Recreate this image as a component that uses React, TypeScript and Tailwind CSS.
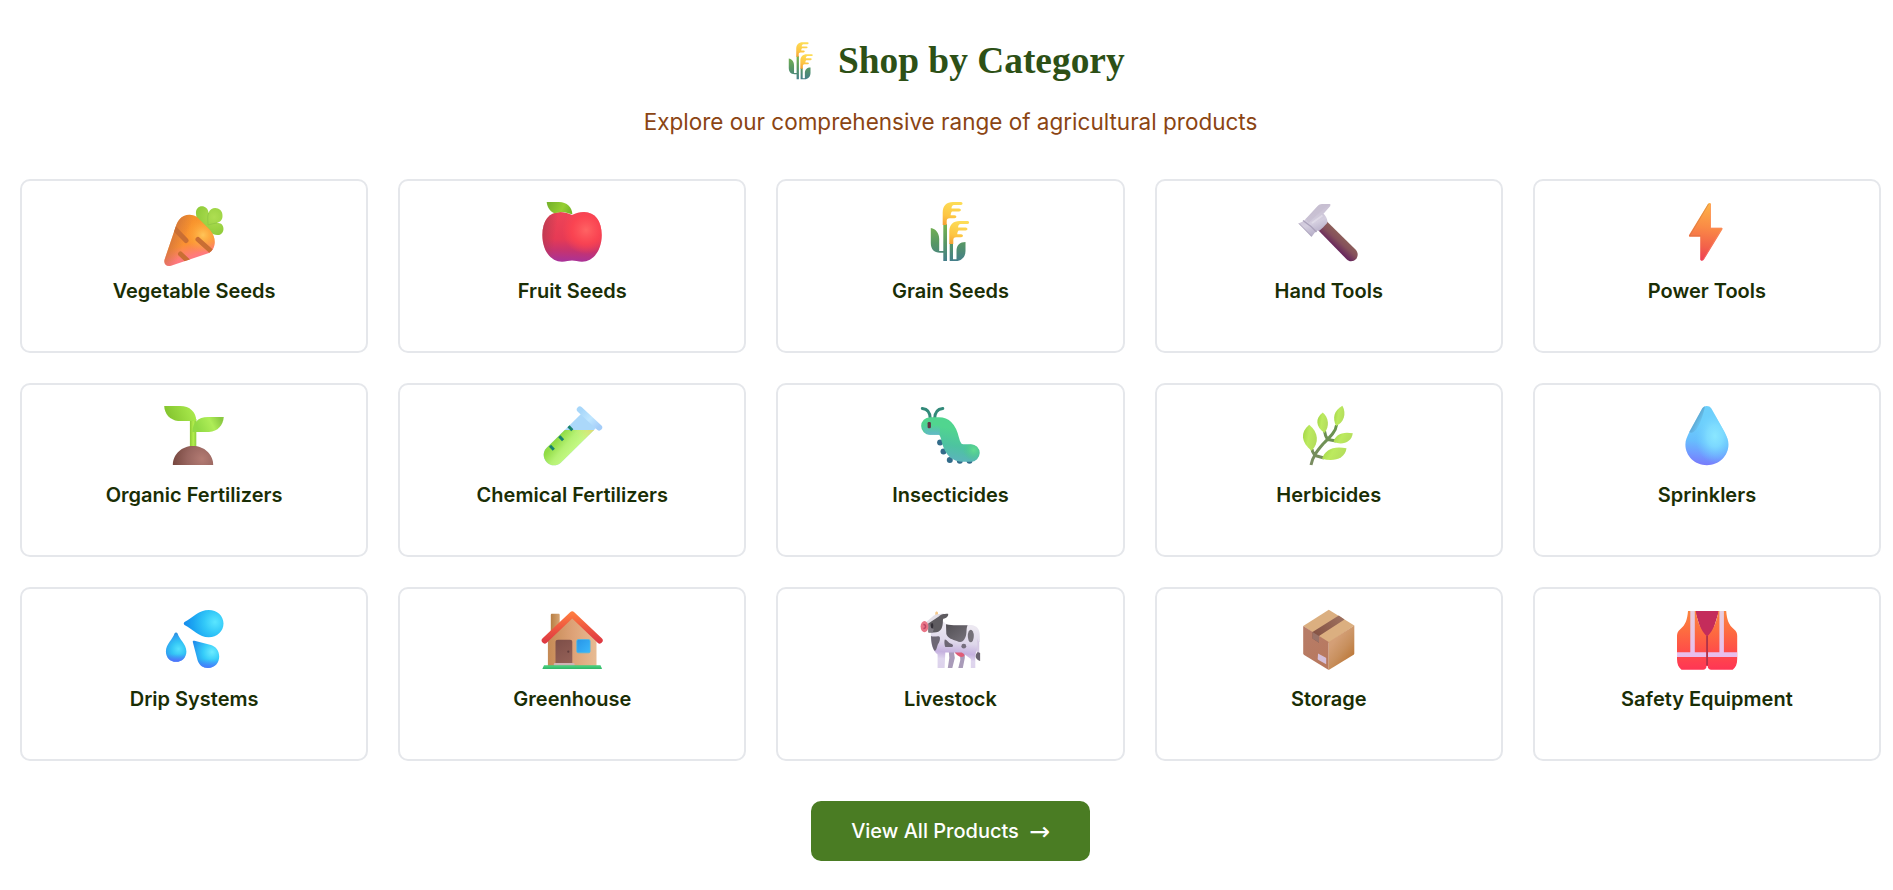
import type { ReactNode } from "react";

type IconProps = { className?: string };

function Icon({ className = "h-[66px] w-[60px]", viewBox = "0 0 60 66", children }: IconProps & { viewBox?: string; children: ReactNode }) {
  return (
    <svg className={`${className} shrink-0 overflow-visible`} viewBox={viewBox} fill="none" aria-hidden="true">
      {children}
    </svg>
  );
}

function Carrot() {
  return (
    <Icon>
      <defs>
        <linearGradient id="carrot-body" x1="22" y1="18" x2="34" y2="60" gradientUnits="userSpaceOnUse">
          <stop stopColor="#f7922b" />
          <stop offset="0.55" stopColor="#fb9133" />
          <stop offset="0.85" stopColor="#ff7b7b" />
          <stop offset="1" stopColor="#ff7685" />
        </linearGradient>
        <radialGradient id="carrot-glow" cx="39" cy="34" r="18" gradientUnits="userSpaceOnUse">
          <stop stopColor="#ffc559" />
          <stop offset="1" stopColor="#ffa62b" stopOpacity="0" />
        </radialGradient>
        <linearGradient id="carrot-edge" x1="7" y1="38" x2="20" y2="43" gradientUnits="userSpaceOnUse">
          <stop stopColor="#c56b3f" stopOpacity="0.6" />
          <stop offset="1" stopColor="#c56b3f" stopOpacity="0" />
        </linearGradient>
        <radialGradient id="carrot-leaf" cx="50" cy="16" r="20" gradientUnits="userSpaceOnUse">
          <stop stopColor="#aede52" />
          <stop offset="1" stopColor="#8dca38" />
        </radialGradient>
        <path id="carrot-shape" d="M15 19C20 12.500 29 12.500 34 17L46 29C53 37 52 48 45 52L7 64.700C2.500 66 -.7 63 .6 58.500L12 25C12.600 23 13.500 21 15 19Z" />
        <clipPath id="carrot-clip"><use href="#carrot-shape" /></clipPath>
      </defs>
      <path d="M32 13C31 3 44 3 44.500 12C47 4 59 6 58.500 15C58.500 19 56 21 53 22C61 20.500 62 33.500 54 34C49 34.500 43 30 38 23C34 20 32 17 32 13Z" fill="url(#carrot-leaf)" />
      <path d="M44.500 12C43 16 44 20 44 24C47 23 50 22.500 53 22" stroke="#93c945" strokeWidth="1" />
      <use href="#carrot-shape" fill="url(#carrot-body)" />
      <use href="#carrot-shape" fill="url(#carrot-glow)" />
      <use href="#carrot-shape" fill="url(#carrot-edge)" />
      <g clipPath="url(#carrot-clip)" stroke="#c96e33" strokeWidth="5" strokeLinecap="round">
        <path d="M10 27L22 39.500M34 38.500L48 51M16.500 53L25 61" />
      </g>
    </Icon>
  );
}

function Apple() {
  return (
    <Icon>
      <defs>
        <linearGradient id="apple-body" x1="30" y1="11" x2="28" y2="61" gradientUnits="userSpaceOnUse">
          <stop stopColor="#ee4557" />
          <stop offset="0.55" stopColor="#e63a55" />
          <stop offset="0.78" stopColor="#c6336f" />
          <stop offset="1" stopColor="#a8329a" />
        </linearGradient>
        <radialGradient id="apple-glow" cx="44" cy="29" r="24" gradientUnits="userSpaceOnUse">
          <stop stopColor="#ff6464" />
          <stop offset="0.6" stopColor="#ff4550" stopOpacity="0.75" />
          <stop offset="1" stopColor="#ff4550" stopOpacity="0" />
        </radialGradient>
        <linearGradient id="apple-edge" x1="0" y1="30" x2="14" y2="32" gradientUnits="userSpaceOnUse">
          <stop stopColor="#a83a50" stopOpacity="0.65" />
          <stop offset="1" stopColor="#a83a50" stopOpacity="0" />
        </linearGradient>
        <linearGradient id="apple-leaf" x1="8" y1="2" x2="28" y2="12" gradientUnits="userSpaceOnUse">
          <stop stopColor="#79b52c" />
          <stop offset="0.6" stopColor="#96cf33" />
          <stop offset="1" stopColor="#76b52a" />
        </linearGradient>
        <path id="apple-shape" d="M30 14C34 12 38 11 42 11C53 11 59.700 20 59.700 34C59.700 50 51 60.700 40 60.700C36 60.700 33 59.500 30 59.500C27 59.500 24 60.700 20 60.700C9 60.700 .4 50 .4 34C.4 20 7 11 18 11C22 11 26 12 30 14Z" />
      </defs>
      <use href="#apple-shape" fill="url(#apple-body)" />
      <use href="#apple-shape" fill="url(#apple-glow)" />
      <use href="#apple-shape" fill="url(#apple-edge)" />
      <path d="M4.700 1H17C25 1 30 6 30.400 13.200C27 13 23 10.500 18 11.200C15 11.500 14 12 12.500 12.300C8 10.500 5 6 4.700 1Z" fill="url(#apple-leaf)" />
    </Icon>
  );
}

function Wheat({ className, viewBox, id }: IconProps & { viewBox?: string; id: string }) {
  return (
    <Icon className={className} viewBox={viewBox}>
      <defs>
        <linearGradient id={`${id}-head`} x1="30" y1="1" x2="24" y2="24" gradientUnits="userSpaceOnUse">
          <stop stopColor="#fddc55" />
          <stop offset="0.6" stopColor="#fdc543" />
          <stop offset="1" stopColor="#f5a034" />
        </linearGradient>
        <linearGradient id={`${id}-stem`} x1="0" y1="24" x2="0" y2="60" gradientUnits="userSpaceOnUse">
          <stop stopColor="#76b350" />
          <stop offset="0.5" stopColor="#579764" />
          <stop offset="1" stopColor="#447e8a" />
        </linearGradient>
        <path id={`${id}-ear`} d="M22.700 24V11.500C22.700 5 26.500 1 33 1H41C43 1 43 4 41 4H34C32.500 4 31.500 5.500 31.500 7.500H39C41.500 7.500 41.500 10.500 39 10.500H32C31 11.500 30.700 13 30.700 14.200H34.500C37 14.200 37 17.200 34.500 17.200H29.500C27.500 17.200 26.700 18.500 26.700 20V24Z" />
      </defs>
      <path d="M23.300 23H27V60H23.300V51.800H20C14 51.800 10.800 48 10.800 42V27C16 28 19.200 32 19.200 38V50H23.300Z" fill={`url(#${id}-stem)`} />
      <path d="M29.700 42H33V58.200H36.500V50C36.500 44 40 41 45.500 41V50C45.500 56 41.500 60 36 60H29.700Z" fill={`url(#${id}-stem)`} />
      <use href={`#${id}-ear`} fill={`url(#${id}-head)`} />
      <use href={`#${id}-ear`} x="6.600" y="19" fill={`url(#${id}-head)`} />
    </Icon>
  );
}

function Hammer() {
  return (
    <Icon>
      <defs>
        <linearGradient id="hammer-grip" x1="43" y1="34" x2="34" y2="44" gradientUnits="userSpaceOnUse">
          <stop stopColor="#8d6059" />
          <stop offset="0.5" stopColor="#85505b" />
          <stop offset="1" stopColor="#6a2a5d" />
        </linearGradient>
        <linearGradient id="hammer-head" x1="14" y1="9" x2="23" y2="32" gradientUnits="userSpaceOnUse">
          <stop stopColor="#c8bfd2" />
          <stop offset="0.5" stopColor="#d4cedf" />
          <stop offset="1" stopColor="#b4acc7" />
        </linearGradient>
      </defs>
      <path d="M19 29L28 20.500L56.500 48.500C61 53 58 60.300 52 60.300C50.500 60.300 49 59.700 47.800 58.500Z" fill="url(#hammer-grip)" />
      <path d="M31.300 3H23C21 3 20 3.800 18.700 5L8 16.500C6.500 18 5.500 19 5 20L-.6 22.500L12.500 36C15 32.500 16.500 30.500 18.500 29.500L20 30C22 28.500 26 24.500 28.200 22C29 19.500 27.500 15.500 24.500 12.800L31.300 5Z" fill="url(#hammer-head)" />
      <path d="M31.300 3.500C26 6 18 14 9.500 22L7 18L20 4Z" fill="#c6bed1" opacity="0.65" />
      <path d="M4 19.500C7 21.500 14 27 17.500 31" stroke="#aba2bb" strokeWidth="1.500" />
      <path d="M0 22.500L12.500 35" stroke="#b0a8be" strokeWidth="1" />
      <path d="M13 22L23.500 14.500" stroke="#e6e3ed" strokeWidth="2" opacity="0.6" />
    </Icon>
  );
}

function Bolt() {
  return (
    <Icon>
      <defs>
        <linearGradient id="bolt-fill" x1="32" y1="2" x2="26" y2="60" gradientUnits="userSpaceOnUse">
          <stop stopColor="#fdb347" />
          <stop offset="0.42" stopColor="#fa8a46" />
          <stop offset="0.75" stopColor="#f3624a" />
          <stop offset="1" stopColor="#ee3d55" />
        </linearGradient>
      </defs>
      <path d="M31.200 2.600C32 1.500 34 1.800 34 3.300V26.800H44.500C45.500 26.800 45.800 27.600 45.300 28.500L26.800 58.800C25.700 60.400 23.200 60 23.200 58.300V35.700H13C12 35.700 11.600 34.800 12.200 33.800Z" fill="url(#bolt-fill)" />
      <path d="M31.500 3L12.700 34.800H23.700" stroke="#c9763f" strokeWidth="1" opacity="0.5" />
      <path d="M33.500 3V27.200H45L26 59" stroke="#ff8e75" strokeWidth="0.800" opacity="0.5" />
    </Icon>
  );
}

function Sprout() {
  return (
    <Icon>
      <defs>
        <linearGradient id="sprout-left" x1="4" y1="14" x2="28" y2="4" gradientUnits="userSpaceOnUse">
          <stop stopColor="#83c42e" />
          <stop offset="1" stopColor="#a8e84b" />
        </linearGradient>
        <linearGradient id="sprout-right" x1="34" y1="24" x2="56" y2="13" gradientUnits="userSpaceOnUse">
          <stop stopColor="#91da45" />
          <stop offset="0.6" stopColor="#aeed57" />
          <stop offset="1" stopColor="#8bca42" />
        </linearGradient>
        <linearGradient id="sprout-stem" x1="26" y1="0" x2="32.500" y2="0" gradientUnits="userSpaceOnUse">
          <stop stopColor="#8bc934" />
          <stop offset="0.5" stopColor="#b3ee4d" />
          <stop offset="1" stopColor="#88ca3d" />
        </linearGradient>
        <radialGradient id="sprout-soil" cx="38" cy="54" r="30" gradientUnits="userSpaceOnUse">
          <stop stopColor="#b37b73" />
          <stop offset="0.5" stopColor="#98655f" />
          <stop offset="1" stopColor="#75463e" />
        </radialGradient>
      </defs>
      <path d="M25.900 14H32.300V45H25.900Z" fill="url(#sprout-stem)" />
      <path d="M.2 1H16C26 1 32 7 32.300 16H14C6 15 .5 9 .2 1Z" fill="url(#sprout-left)" />
      <path d="M59.800 12H44C34 12 28.400 18 28.400 27H45C54 26.500 59 20 59.800 12Z" fill="url(#sprout-right)" />
      <path d="M8.800 60C8.800 49 18 41 29 41S49.200 49 49.200 60Z" fill="url(#sprout-soil)" />
    </Icon>
  );
}

function TestTube() {
  return (
    <Icon>
      <defs>
        <linearGradient id="tube-liquid" x1="18" y1="31" x2="34" y2="44" gradientUnits="userSpaceOnUse">
          <stop stopColor="#91dc45" />
          <stop offset="0.5" stopColor="#b5f173" />
          <stop offset="1" stopColor="#c5fa85" />
        </linearGradient>
        <linearGradient id="tube-shine" x1="52" y1="26" x2="38" y2="36" gradientUnits="userSpaceOnUse">
          <stop stopColor="#e7d26d" stopOpacity="0.8" />
          <stop offset="1" stopColor="#d8ec7c" stopOpacity="0" />
        </linearGradient>
        <linearGradient id="tube-rim" x1="40" y1="5" x2="57" y2="22" gradientUnits="userSpaceOnUse">
          <stop stopColor="#a8d7fa" />
          <stop offset="0.5" stopColor="#bfe6ff" />
          <stop offset="1" stopColor="#a4cdf9" />
        </linearGradient>
        <path id="tube-shape" d="M39.500 8.500L54 23L18.500 58C14.500 61.500 8 61 4.500 57S.5 47 4.500 43Z" />
        <clipPath id="tube-clip"><path d="M0 25H60V62H0Z" /></clipPath>
      </defs>
      <use href="#tube-shape" fill="#abd8fa" />
      <g clipPath="url(#tube-clip)">
        <use href="#tube-shape" fill="url(#tube-liquid)" />
        <use href="#tube-shape" fill="url(#tube-shine)" />
      </g>
      <path d="M37.800 4.500L57.200 22.500" stroke="url(#tube-rim)" strokeWidth="6" strokeLinecap="round" />
      <path d="M26.500 21.300L30.300 25.300M17.300 31.300L21.100 35.300M8 40.700L11.800 44.700" stroke="#18826d" strokeWidth="3" />
    </Icon>
  );
}

function Caterpillar() {
  return (
    <Icon viewBox="-0.800 0 60 66">
      <defs>
        <linearGradient id="bug-body" x1="38" y1="25" x2="31" y2="57" gradientUnits="userSpaceOnUse">
          <stop stopColor="#51d58f" />
          <stop offset="0.5" stopColor="#4dc3a0" />
          <stop offset="1" stopColor="#5db2bf" />
        </linearGradient>
        <linearGradient id="bug-chin" x1="10" y1="20" x2="10" y2="31" gradientUnits="userSpaceOnUse">
          <stop stopColor="#65b6cf" stopOpacity="0" />
          <stop offset="1" stopColor="#65b6cf" />
        </linearGradient>
        <radialGradient id="bug-tail" cx="53" cy="45" r="11" gradientUnits="userSpaceOnUse">
          <stop stopColor="#62dc92" />
          <stop offset="1" stopColor="#4bc784" stopOpacity="0" />
        </radialGradient>
      </defs>
      <g fill="#326b89">
        <circle cx="19.300" cy="37.500" r="3" />
        <circle cx="22.700" cy="46.500" r="3" />
        <circle cx="29" cy="55" r="3" />
        <circle cx="39" cy="55.700" r="3" />
        <circle cx="48.700" cy="55.700" r="3" />
      </g>
      <path d="M1.500 3.500C7 4 9.500 7.500 9.500 14M22 3.500C17 4 13.800 7.500 13.800 14" stroke="#328979" strokeWidth="3" strokeLinecap="round" />
      <path d="M9.200 21H18C25.500 21 28 28 29.500 34.500C31.500 43 35 48 42.500 48H50" stroke="url(#bug-body)" strokeWidth="17.700" strokeLinecap="round" />
      <path d="M2 20H19V29.800H9.500C5 29.800 2 26 2 20Z" fill="url(#bug-chin)" />
      <circle cx="50" cy="48" r="8.700" fill="url(#bug-tail)" />
      <rect x="6.800" y="17" width="3.300" height="6.300" rx="1.200" fill="#623443" />
    </Icon>
  );
}

function Herb() {
  return (
    <Icon>
      <defs>
        <linearGradient id="herb-leaf" x1="0" y1="0" x2="1" y2="0.300">
          <stop stopColor="#a0d444" />
          <stop offset="0.5" stopColor="#bcea5f" />
          <stop offset="1" stopColor="#b4de5c" />
        </linearGradient>
        <linearGradient id="herb-stem" x1="38" y1="20" x2="12" y2="60" gradientUnits="userSpaceOnUse">
          <stop stopColor="#67934b" />
          <stop offset="1" stopColor="#7a8c62" />
        </linearGradient>
      </defs>
      <path d="M12 60C14 51 18 46 24 39C32 31 37 26 37.500 20M25.500 26C26 30 27 32 28.500 34.500M29 34.500L37 36M13 44C13 47 15 49 16 50.500M16 50.500L25 53" stroke="url(#herb-stem)" strokeWidth="3" />
      <g fill="url(#herb-leaf)">
        <path d="M43.400 .8C34.500 6 33.500 13 37 21C44.500 18 48 9 43.400 .8Z" />
        <path d="M23.800 7.500C16 13 16.500 22 25.500 28C31 21 29.500 12.500 23.800 7.500Z" />
        <path d="M10.200 19.700C1 27 2 37.500 12.500 45.700C20.500 38 19.500 27 10.200 19.700Z" />
        <path d="M53.800 28.300C43 26 36 30 34.500 37C43.500 40.500 52.500 37.500 53.800 28.300Z" />
        <path d="M47.500 43.300C34 40.500 26 45 23 53.800C34 57 46 54.500 47.500 43.300Z" />
      </g>
    </Icon>
  );
}

function Droplet() {
  return (
    <Icon>
      <defs>
        <linearGradient id="drop-fill" x1="34" y1="20" x2="28" y2="60" gradientUnits="userSpaceOnUse">
          <stop stopColor="#6ccffb" />
          <stop offset="0.45" stopColor="#67bdfd" />
          <stop offset="0.75" stopColor="#709bff" />
          <stop offset="1" stopColor="#787cfb" />
        </linearGradient>
        <radialGradient id="drop-glow" cx="0" cy="0" r="1" gradientTransform="translate(38 31) scale(20 27)" gradientUnits="userSpaceOnUse">
          <stop stopColor="#8ae7ff" />
          <stop offset="0.4" stopColor="#80deff" stopOpacity="0.85" />
          <stop offset="1" stopColor="#6acbff" stopOpacity="0" />
        </radialGradient>
        <linearGradient id="drop-edge" x1="17" y1="16" x2="24" y2="20" gradientUnits="userSpaceOnUse">
          <stop stopColor="#5796c0" stopOpacity="0.75" />
          <stop offset="1" stopColor="#5796c0" stopOpacity="0" />
        </linearGradient>
        <path id="drop-shape" d="M25.200 3.500C27 .2 32.500 .2 34.400 3.500L47.500 27C50 32 51.400 35 51.400 39.500C51.400 51 42 60.200 29.900 60.200S8.400 51 8.400 39.500C8.400 35 10 32 12.300 27Z" />
      </defs>
      <use href="#drop-shape" fill="url(#drop-fill)" />
      <use href="#drop-shape" fill="url(#drop-glow)" />
      <path d="M25.200 3.500L12.300 27C16 30 23 24 28 1.500C27 1.800 26 2.300 25.200 3.500Z" fill="url(#drop-edge)" />
    </Icon>
  );
}

function Splash() {
  return (
    <Icon>
      <defs>
        <radialGradient id="splash-big" cx="51" cy="13" r="31" gradientUnits="userSpaceOnUse">
          <stop stopColor="#5ae6ff" />
          <stop offset="0.35" stopColor="#32c8f8" />
          <stop offset="0.7" stopColor="#1ca6f2" />
          <stop offset="1" stopColor="#168bec" />
        </radialGradient>
        <radialGradient id="splash-left" cx="14.500" cy="40" r="18" gradientUnits="userSpaceOnUse">
          <stop stopColor="#55e2fd" />
          <stop offset="0.4" stopColor="#32c4f5" />
          <stop offset="0.7" stopColor="#30a3f0" />
          <stop offset="1" stopColor="#2d86d4" />
        </radialGradient>
        <radialGradient id="splash-right" cx="48" cy="43" r="20" gradientUnits="userSpaceOnUse">
          <stop stopColor="#6cecff" />
          <stop offset="0.45" stopColor="#35ccf9" />
          <stop offset="1" stopColor="#218eec" />
        </radialGradient>
        <linearGradient id="splash-shade" x1="0" y1="50" x2="0" y2="61" gradientUnits="userSpaceOnUse">
          <stop stopColor="#5270ff" stopOpacity="0" />
          <stop offset="1" stopColor="#5270ff" />
        </linearGradient>
        <linearGradient id="splash-shade-left" x1="0" y1="45" x2="0" y2="54" gradientUnits="userSpaceOnUse">
          <stop stopColor="#5865ff" stopOpacity="0" />
          <stop offset="1" stopColor="#5865ff" />
        </linearGradient>
        <path id="splash-a" d="M10.500 24.500C11 23 13 23 13.600 24.500C15 30 22.400 35 22.400 42.400C22.400 48.300 18 52.800 12.100 52.800S1.900 48.300 1.900 42.400C1.900 35 9 30 10.500 24.500Z" />
        <path id="splash-b" d="M28.800 33C28.500 31.800 29.500 31.500 30.500 31.800L47 36C52 37.500 55.200 42 55.200 47.500C55.200 54 50.500 59 44 59C39 59 35 56 33.500 51Z" />
      </defs>
      <path d="M20.500 13C19.500 14 19.500 15 20.500 16C29 20.500 35 28.300 44.800 28.300C53 28.300 59.500 22.500 59.500 14.600S53 1 44.800 1C35 1 29 8.500 20.500 13Z" fill="url(#splash-big)" />
      <use href="#splash-a" fill="url(#splash-left)" />
      <use href="#splash-a" fill="url(#splash-shade-left)" />
      <use href="#splash-b" fill="url(#splash-right)" />
      <use href="#splash-b" fill="url(#splash-shade)" />
    </Icon>
  );
}

function House() {
  return (
    <Icon>
      <defs>
        <linearGradient id="house-wall" x1="6" y1="40" x2="54" y2="40" gradientUnits="userSpaceOnUse">
          <stop stopColor="#c58a55" />
          <stop offset="0.5" stopColor="#dda176" />
          <stop offset="1" stopColor="#e7bb93" />
        </linearGradient>
        <linearGradient id="house-roof" x1="30" y1="4" x2="30" y2="35" gradientUnits="userSpaceOnUse">
          <stop stopColor="#ff7c40" />
          <stop offset="0.5" stopColor="#ed5540" />
          <stop offset="1" stopColor="#dc3543" />
        </linearGradient>
        <linearGradient id="house-chimney" x1="9" y1="0" x2="18" y2="0" gradientUnits="userSpaceOnUse">
          <stop stopColor="#b77f45" />
          <stop offset="1" stopColor="#d9a673" />
        </linearGradient>
        <linearGradient id="house-window" x1="35" y1="31" x2="48" y2="44" gradientUnits="userSpaceOnUse">
          <stop stopColor="#2896e8" />
          <stop offset="1" stopColor="#3cb8fb" />
        </linearGradient>
        <linearGradient id="house-door" x1="14" y1="31" x2="30" y2="55" gradientUnits="userSpaceOnUse">
          <stop stopColor="#7d4e48" />
          <stop offset="1" stopColor="#966258" />
        </linearGradient>
      </defs>
      <path d="M8.800 4C8.800 3.200 9.300 2.700 10 2.700H16.500C17.300 2.700 17.700 3.200 17.700 4V22H8.800Z" fill="url(#house-chimney)" transform="translate(0 2)" />
      <path d="M5.900 28L30.200 6L54.500 28V57H5.900Z" fill="url(#house-wall)" />
      <path d="M2.700 31.500L30.200 5.300L57.700 31.500" stroke="url(#house-roof)" strokeWidth="6" strokeLinecap="round" strokeLinejoin="round" />
      <path d="M13.500 55V33C13.500 31.500 14.500 30.700 16 30.700H28C29.500 30.700 30.300 31.500 30.300 33V55Z" fill="url(#house-door)" />
      <circle cx="26.300" cy="42.700" r="1.100" fill="#633d3c" />
      <rect x="11.800" y="54" width="20.800" height="3" rx="1" fill="#cfb4b5" />
      <rect x="34.800" y="30.500" width="13.300" height="13.300" rx="1.500" fill="url(#house-window)" stroke="#4db9e5" strokeWidth="0.800" />
      <path d="M2 56.300H58.500L60 60H.3Z" fill="#43cc7a" />
      <path d="M1 59.300H59.300" stroke="#36b86b" strokeWidth="1.400" />
    </Icon>
  );
}

function Cow() {
  return (
    <Icon viewBox="-0.800 0 60 66">
      <defs>
        <linearGradient id="cow-body" x1="35" y1="17" x2="31" y2="58" gradientUnits="userSpaceOnUse">
          <stop stopColor="#ece8f1" />
          <stop offset="0.4" stopColor="#ded7ea" />
          <stop offset="0.65" stopColor="#c5b1df" />
          <stop offset="0.82" stopColor="#dfd6ee" />
          <stop offset="1" stopColor="#ddd3ec" />
        </linearGradient>
        <linearGradient id="cow-spot" x1="25" y1="16" x2="39" y2="33" gradientUnits="userSpaceOnUse">
          <stop stopColor="#535055" />
          <stop offset="1" stopColor="#716d75" />
        </linearGradient>
      </defs>
      <path d="M28 42H33L34 49L31.500 59H27L28.500 49Z" fill="#a99bb9" />
      <path d="M39 42H44V49L42 59H37.500L39.500 51Z" fill="#a99bb9" />
      <path d="M33 42H43L43.500 47C40 49.500 36 47 33 42Z" fill="#df5c77" />
      <path d="M56.500 24C58 31 57 37 57.500 44" stroke="#d5c9e3" strokeWidth="2.200" />
      <path d="M57 43C53.500 46 54 50 59.300 52V44Z" fill="#68616e" />
      <path d="M10 20L22 12L25.500 15.300C32 17 42 16 50 16C56 16.500 59 20 59 27V33C57.500 33 57 31 56.500 29V40C56 43 54.700 44 54.500 48V59H50V50L46 47L41 43.500H24.500L23.800 59H16.800V45.500C12 42 10.500 35 10 29Z" fill="url(#cow-body)" />
      <path d="M25.200 15.300C32 17 40 16 46.800 16.200C45 20 46.500 24 44.500 28.500C42.500 33.500 39 34 36 32C32 30.500 27 29.500 25.500 25Z" fill="url(#cow-spot)" />
      <ellipse cx="50" cy="27" rx="3" ry="6.300" fill="#757179" />
      <path d="M10.200 27C14 28.500 18 26 19 28C19.500 30 19 33 17 35.500C16 38 16 41 14 42C11.500 39 10.300 33 10.200 27Z" fill="#6d6774" />
      <path d="M24 30.500C27 31 27 34 31 35C33 36 32.500 38 30.500 38H24.500C23.500 36 23.300 32 24 30.500Z" fill="#6d6774" />
      <circle cx="43" cy="37.200" r="2.400" fill="#766f7d" />
      <path d="M14.500 7V4C14.500 2 17 2 17.200 4V7Z" fill="#f6c98b" />
      <path d="M6 12.500L13 6.500C16 4.500 20 5 23 4.500L14 15L7 19Z" fill="#e2dee6" />
      <path d="M7.500 14.500L18 7.500C21 4.500 25 5 27.300 4.800C28 7 26 9 22.500 9.800C21.500 12 23 15 20.500 20C19 22.500 16.500 23.500 13 23.500H7.500Z" fill="#5e5b60" />
      <path d="M8 21.500V14C10 16 9 19 13 20L12 23.500H8Z" fill="#7e7982" />
      <ellipse cx="3.700" cy="17.600" rx="3.900" ry="5.600" fill="#e97586" />
      <path d="M2.600 15.500C5.500 15.500 5.500 19.500 2.600 19.500" stroke="#bb4665" strokeWidth="1.500" />
      <ellipse cx="11.300" cy="16.800" rx="1.200" ry="2.700" fill="#332f37" />
    </Icon>
  );
}

function Parcel() {
  return (
    <Icon>
      <defs>
        <linearGradient id="parcel-left" x1="7" y1="25" x2="26" y2="57" gradientUnits="userSpaceOnUse">
          <stop stopColor="#b77c67" />
          <stop offset="1" stopColor="#b8785d" />
        </linearGradient>
        <linearGradient id="parcel-right" x1="33" y1="35" x2="52" y2="50" gradientUnits="userSpaceOnUse">
          <stop stopColor="#d49f76" />
          <stop offset="0.5" stopColor="#c8905e" />
          <stop offset="1" stopColor="#bd793b" />
        </linearGradient>
        <linearGradient id="parcel-tape" x1="43" y1="7" x2="16" y2="27" gradientUnits="userSpaceOnUse">
          <stop stopColor="#9d705e" />
          <stop offset="1" stopColor="#855344" />
        </linearGradient>
      </defs>
      <path d="M29.800 .8L55.300 16.500L29.700 34L4.200 17Z" fill="#dbaf80" />
      <path d="M4.200 17L29.700 33V61L5.200 46C4.500 45.500 4.200 45 4.200 44Z" fill="url(#parcel-left)" />
      <path d="M29.700 33L55.300 16.500V44C55.300 45 55 45.600 54.200 46.100L29.700 61Z" fill="url(#parcel-right)" />
      <path d="M39.800 6.500L45.500 10.500L20 27V33.800L13.500 29.500V23Z" fill="url(#parcel-tape)" />
      <path d="M13.500 23L20 27V33.800L13.500 29.500Z" fill="#9a7267" />
      <path d="M19 44.500L26.500 48.500C27 48.800 27.200 49 27.200 49.700V55.200L19.500 51C19 50.700 18.700 50.300 18.700 49.700Z" fill="#d5bfd9" />
    </Icon>
  );
}

function Vest() {
  return (
    <Icon>
      <defs>
        <linearGradient id="vest-fill" x1="0" y1="2" x2="0" y2="61" gradientUnits="userSpaceOnUse">
          <stop stopColor="#fb843f" />
          <stop offset="0.35" stopColor="#fd6b40" />
          <stop offset="0.7" stopColor="#ff4c49" />
          <stop offset="1" stopColor="#ff3555" />
        </linearGradient>
        <linearGradient id="vest-band" x1="0" y1="2" x2="0" y2="48" gradientUnits="userSpaceOnUse">
          <stop stopColor="#e7cfdf" />
          <stop offset="1" stopColor="#e8bdec" />
        </linearGradient>
        <path id="vest-half" d="M18.800 2H11C10.300 10 9 15.500 3 20.500C1 22 0 24 0 27V50C0 55 1.500 58.500 4.500 60.700H26C28 60.700 29.500 59.500 29.500 57V27C24 22 20 11 18.800 2Z" />
        <clipPath id="vest-clip"><use href="#vest-half" /></clipPath>
      </defs>
      <path d="M18 2H42L34 28H31V57H29V28H26Z" fill="#c42c5b" />
      <g>
        <use href="#vest-half" fill="url(#vest-fill)" />
        <g clipPath="url(#vest-clip)" fill="url(#vest-band)">
          <path d="M13.300 2H17.800V44H13.300Z" />
          <path d="M0 43.300H30V48H0Z" />
        </g>
      </g>
      <g transform="translate(60.200 0) scale(-1 1)">
        <use href="#vest-half" fill="url(#vest-fill)" />
        <g clipPath="url(#vest-clip)" fill="url(#vest-band)">
          <path d="M13.300 2H17.800V44H13.300Z" />
          <path d="M0 43.300H30V48H0Z" />
        </g>
      </g>
      <path d="M30.100 27V56" stroke="#ae3348" strokeWidth="1.700" />
    </Icon>
  );
}

const categories: { name: string; icon: ReactNode }[] = [
  { name: "Vegetable Seeds", icon: <Carrot /> },
  { name: "Fruit Seeds", icon: <Apple /> },
  { name: "Grain Seeds", icon: <Wheat id="grain" /> },
  { name: "Hand Tools", icon: <Hammer /> },
  { name: "Power Tools", icon: <Bolt /> },
  { name: "Organic Fertilizers", icon: <Sprout /> },
  { name: "Chemical Fertilizers", icon: <TestTube /> },
  { name: "Insecticides", icon: <Caterpillar /> },
  { name: "Herbicides", icon: <Herb /> },
  { name: "Sprinklers", icon: <Droplet /> },
  { name: "Drip Systems", icon: <Splash /> },
  { name: "Greenhouse", icon: <House /> },
  { name: "Livestock", icon: <Cow /> },
  { name: "Storage", icon: <Parcel /> },
  { name: "Safety Equipment", icon: <Vest /> },
];

export default function App() {
  return (
    <main className="min-h-screen bg-white pt-8 pr-3 pl-5 font-['Inter',sans-serif]">
      <header className="flex flex-col items-center">
        <h2 className="flex h-[58px] items-center font-['Liberation_Serif',serif] text-[37.4px] font-bold text-[#2d5016]">
          <Wheat id="title" className="mr-[18px] ml-[6px] h-[37.600px] w-[37.600px]" viewBox="0 0.500 60 60" />
          <span className="pt-px">Shop by Category</span>
        </h2>
        <p className="mt-[14px] flex h-9 items-center text-[22.5px] text-[#8b4513]">Explore our comprehensive range of agricultural products</p>
      </header>
      <div className="mt-[39px] grid grid-cols-5 gap-[30px]">
        {categories.map(({ name, icon }) => (
          <a key={name} href="#" className="flex h-[174px] flex-col items-center rounded-[10px] border-2 border-[#e5e7eb] bg-white pt-5">
            {icon}
            <h3 className="mt-[9px] text-[20px] leading-[30px] font-semibold text-[#1a2e05]">{name}</h3>
          </a>
        ))}
      </div>
      <div className="mt-10 flex justify-center">
        <a href="#" className="flex h-[60px] w-[279px] items-center justify-center gap-[10px] rounded-[10px] bg-[#4a7c23] text-[20px] font-medium text-white">
          <span>View All Products</span>
          <span className="font-['DejaVu_Sans',sans-serif] text-[25px] leading-none font-normal">→</span>
        </a>
      </div>
    </main>
  );
}
